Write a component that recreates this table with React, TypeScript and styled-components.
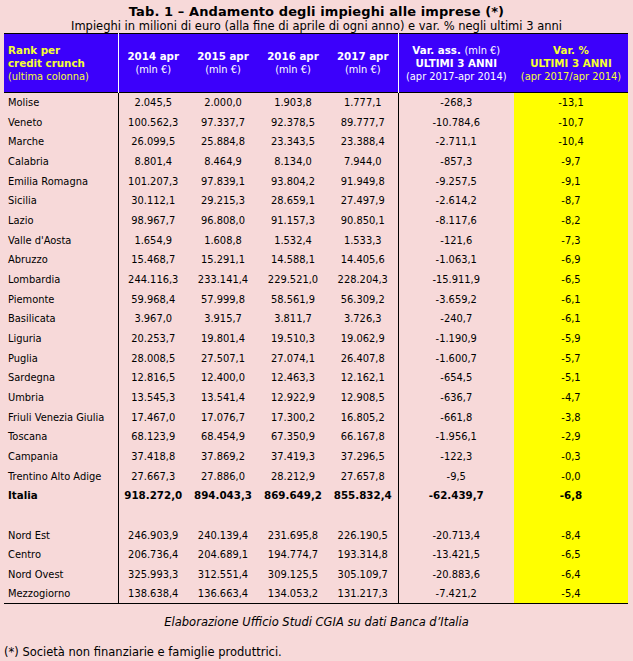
import React from "react";
import styled, { createGlobalStyle } from "styled-components";

const Global = createGlobalStyle`
  html, body { margin: 0; padding: 0; background: #f7d9d9; }
  body { font-family: "DejaVu Sans", Verdana, sans-serif; color: #000; }
`;

const Page = styled.div`
  width: 633px;
  height: 661px;
  background: #f7d9d9;
  display: flex;
  flex-direction: column;
  align-items: center;
`;

const Title = styled.div`
  margin-top: 4px;
  font-size: 13px;
  font-weight: bold;
  line-height: 16px;
  letter-spacing: 0.1px;
`;

const Subtitle = styled.div`
  font-size: 11.5px;
  line-height: 13px;
`;

const Table = styled.table`
  align-self: flex-start;
  margin-left: 4px;
  border-collapse: collapse;
  table-layout: fixed;
  width: 624px;
  border-top: 1px solid #000;
  border-bottom: 1px solid #000;
  font-size: 9.9px;
`;

const HeadRow = styled.tr`
  background: #3c00fb;
  height: 59px;
  border-bottom: 1px solid #000;
`;

const Th = styled.th<{ $yellow?: boolean; $left?: boolean; $divider?: boolean }>`
  color: ${(p) => (p.$yellow ? "#f5ff33" : "#fff")};
  text-align: ${(p) => (p.$left ? "left" : "center")};
  padding: ${(p) => (p.$left ? "0 0 0 4px" : "0")};
  font-size: 10.3px;
  line-height: 13px;
  vertical-align: middle;
  border-right: ${(p) => (p.$divider ? "1px solid #fff" : "none")};
`;

const Light = styled.span`
  font-weight: normal;
  font-size: 9.9px;
`;

const Row = styled.tr<{ $bold?: boolean }>`
  height: 19.68px;
  font-weight: ${(p) => (p.$bold ? "bold" : "normal")};
  font-size: ${(p) => (p.$bold ? "10.3px" : "9.9px")};
`;

const Td = styled.td<{ $left?: boolean; $divider?: boolean; $hl?: boolean }>`
  text-align: ${(p) => (p.$left ? "left" : "center")};
  padding: ${(p) => (p.$left ? "0 0 0 4px" : "0")};
  white-space: nowrap;
  background: ${(p) => (p.$hl ? "#ffff00" : "transparent")};
  border-right: ${(p) => (p.$divider ? "1px solid #000" : "none")};
  line-height: 13px;
`;

const Source = styled.div`
  margin-top: 11px;
  font-size: 11.5px;
  font-style: italic;
  line-height: 14px;
`;

const Note = styled.div`
  align-self: flex-start;
  margin-left: 4px;
  margin-top: 16px;
  font-size: 11.5px;
  line-height: 14px;
`;

type R = [string, string, string, string, string, string, string];

const regions: R[] = [
  ["Molise", "2.045,5", "2.000,0", "1.903,8", "1.777,1", "-268,3", "-13,1"],
  ["Veneto", "100.562,3", "97.337,7", "92.378,5", "89.777,7", "-10.784,6", "-10,7"],
  ["Marche", "26.099,5", "25.884,8", "23.343,5", "23.388,4", "-2.711,1", "-10,4"],
  ["Calabria", "8.801,4", "8.464,9", "8.134,0", "7.944,0", "-857,3", "-9,7"],
  ["Emilia Romagna", "101.207,3", "97.839,1", "93.804,2", "91.949,8", "-9.257,5", "-9,1"],
  ["Sicilia", "30.112,1", "29.215,3", "28.659,1", "27.497,9", "-2.614,2", "-8,7"],
  ["Lazio", "98.967,7", "96.808,0", "91.157,3", "90.850,1", "-8.117,6", "-8,2"],
  ["Valle d'Aosta", "1.654,9", "1.608,8", "1.532,4", "1.533,3", "-121,6", "-7,3"],
  ["Abruzzo", "15.468,7", "15.291,1", "14.588,1", "14.405,6", "-1.063,1", "-6,9"],
  ["Lombardia", "244.116,3", "233.141,4", "229.521,0", "228.204,3", "-15.911,9", "-6,5"],
  ["Piemonte", "59.968,4", "57.999,8", "58.561,9", "56.309,2", "-3.659,2", "-6,1"],
  ["Basilicata", "3.967,0", "3.915,7", "3.811,7", "3.726,3", "-240,7", "-6,1"],
  ["Liguria", "20.253,7", "19.801,4", "19.510,3", "19.062,9", "-1.190,9", "-5,9"],
  ["Puglia", "28.008,5", "27.507,1", "27.074,1", "26.407,8", "-1.600,7", "-5,7"],
  ["Sardegna", "12.816,5", "12.400,0", "12.463,3", "12.162,1", "-654,5", "-5,1"],
  ["Umbria", "13.545,3", "13.541,4", "12.922,9", "12.908,5", "-636,7", "-4,7"],
  ["Friuli Venezia Giulia", "17.467,0", "17.076,7", "17.300,2", "16.805,2", "-661,8", "-3,8"],
  ["Toscana", "68.123,9", "68.454,9", "67.350,9", "66.167,8", "-1.956,1", "-2,9"],
  ["Campania", "37.418,8", "37.869,2", "37.419,3", "37.296,5", "-122,3", "-0,3"],
  ["Trentino Alto Adige", "27.667,3", "27.886,0", "28.212,9", "27.657,8", "-9,5", "-0,0"],
];

const total: R = ["Italia", "918.272,0", "894.043,3", "869.649,2", "855.832,4", "-62.439,7", "-6,8"];

const areas: R[] = [
  ["Nord Est", "246.903,9", "240.139,4", "231.695,8", "226.190,5", "-20.713,4", "-8,4"],
  ["Centro", "206.736,4", "204.689,1", "194.774,7", "193.314,8", "-13.421,5", "-6,5"],
  ["Nord Ovest", "325.993,3", "312.551,4", "309.125,5", "305.109,7", "-20.883,6", "-6,4"],
  ["Mezzogiorno", "138.638,4", "136.663,4", "134.053,2", "131.217,3", "-7.421,2", "-5,4"],
];

const DataRow = ({ r, bold }: { r: R; bold?: boolean }) => (
  <Row $bold={bold}>
    <Td $left $divider>{r[0]}</Td>
    <Td>{r[1]}</Td>
    <Td>{r[2]}</Td>
    <Td>{r[3]}</Td>
    <Td $divider>{r[4]}</Td>
    <Td>{r[5]}</Td>
    <Td $hl>{r[6]}</Td>
  </Row>
);

export default function App() {
  return (
    <Page>
      <Global />
      <Title>Tab. 1 – Andamento degli impieghi alle imprese (*)</Title>
      <Subtitle>
        Impieghi in milioni di euro (alla fine di aprile di ogni anno) e var. % negli ultimi 3 anni
      </Subtitle>
      <Table>
        <colgroup>
          <col style={{ width: 114 }} />
          <col style={{ width: 70 }} />
          <col style={{ width: 70 }} />
          <col style={{ width: 70 }} />
          <col style={{ width: 70 }} />
          <col style={{ width: 116 }} />
          <col style={{ width: 114 }} />
        </colgroup>
        <thead>
          <HeadRow>
            <Th $yellow $left $divider>
              Rank per
              <br />
              credit crunch
              <br />
              <Light>(ultima colonna)</Light>
            </Th>
            <Th>
              2014 apr
              <br />
              <Light>(mln €)</Light>
            </Th>
            <Th>
              2015 apr
              <br />
              <Light>(mln €)</Light>
            </Th>
            <Th>
              2016 apr
              <br />
              <Light>(mln €)</Light>
            </Th>
            <Th $divider>
              2017 apr
              <br />
              <Light>(mln €)</Light>
            </Th>
            <Th>
              Var. ass. <Light>(mln €)</Light>
              <br />
              ULTIMI 3 ANNI
              <br />
              <Light>(apr 2017-apr 2014)</Light>
            </Th>
            <Th $yellow>
              Var. %
              <br />
              ULTIMI 3 ANNI
              <br />
              <Light>(apr 2017/apr 2014)</Light>
            </Th>
          </HeadRow>
        </thead>
        <tbody>
          {regions.map((r) => (
            <DataRow key={r[0]} r={r} />
          ))}
          <DataRow r={total} bold />
          <DataRow r={["", "", "", "", "", "", ""]} />
          {areas.map((r) => (
            <DataRow key={r[0]} r={r} />
          ))}
        </tbody>
      </Table>
      <Source>Elaborazione Ufficio Studi CGIA su dati Banca d’Italia</Source>
      <Note>(*) Società non finanziarie e famiglie produttrici.</Note>
    </Page>
  );
}
